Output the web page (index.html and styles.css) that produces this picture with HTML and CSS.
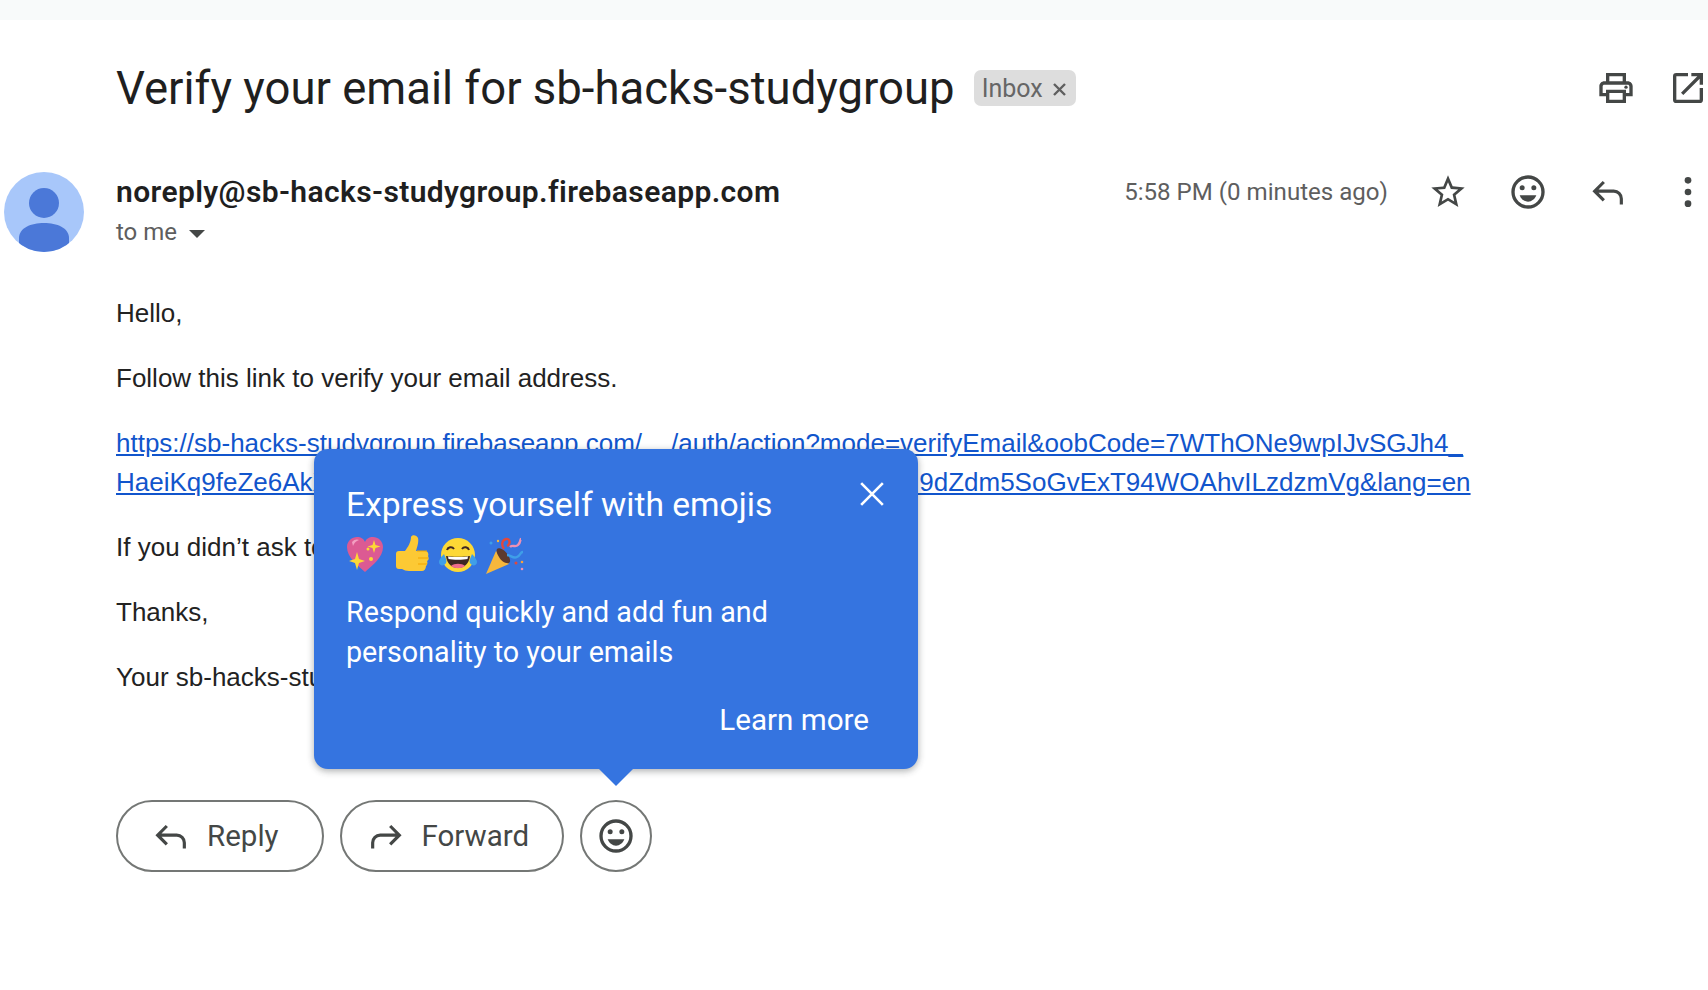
FILE: index.html
```html
<!DOCTYPE html>
<html lang="en">
<head>
<meta charset="utf-8">
<title>Verify your email</title>
<link rel="stylesheet" href="styles.css">
</head>
<body>
<svg class="defs" width="0" height="0" aria-hidden="true">
  <defs>
    <symbol id="i-reply" viewBox="0 0 24 24"><path class="arrow" d="M9.500 6L4 11.500 9.500 17M4.500 11.500h11c2.500 0 4.500 2 4.500 4.500v3.500"/></symbol>
    <symbol id="i-forward" viewBox="0 0 24 24"><path class="arrow" d="M14.500 6L20 11.500 14.500 17M19.500 11.500h-11C6 11.500 4 13.500 4 16v3.500"/></symbol>
    <symbol id="i-smile" viewBox="0 0 24 24"><path d="M12 2a10 10 0 1 0 0 20 10 10 0 0 0 0-20zm0 18a8 8 0 1 1 0-16 8 8 0 0 1 0 16z"/><circle cx="8.500" cy="9.500" r="1.500"/><circle cx="15.500" cy="9.500" r="1.500"/><path d="M7 14h10c-.8 2.300-2.800 3.800-5 3.800S7.800 16.300 7 14z"/></symbol>
    <clipPath id="avatar-clip"><circle cx="40" cy="40" r="40"/></clipPath>
  </defs>
</svg>
<div class="topbar"></div>
<main class="mail">
  <header class="subject">
    <h1 class="subject-title">Verify your email for sb-hacks-studygroup</h1>
    <span class="chip">Inbox <svg class="chip-x" viewBox="0 0 13 13"><path d="M1 1l11 11M12 1L1 12"/></svg></span>
    <div class="subject-actions">
      <svg class="icon" viewBox="0 0 24 24"><path d="M19 8h-1V3H6v5H5c-1.700 0-3 1.300-3 3v6h4v4h12v-4h4v-6c0-1.700-1.300-3-3-3zM8 5h8v3H8zm8 14H8v-4h8zm2-4v-2H6v2H4v-4c0-.6.400-1 1-1h14c.6 0 1 .4 1 1v4z"/><circle cx="18" cy="11.500" r="1"/></svg>
      <svg class="icon" viewBox="0 0 24 24"><path d="M19 19H5V5h7V3H5a2 2 0 0 0-2 2v14a2 2 0 0 0 2 2h14a2 2 0 0 0 2-2v-7h-2zM14 3v2h3.600l-9.800 9.800 1.400 1.400L19 6.400V10h2V3z"/></svg>
    </div>
  </header>

  <section class="sender">
    <svg class="avatar" viewBox="0 0 80 80"><circle cx="40" cy="40" r="40" fill="#a8c7fa"/><circle cx="40" cy="31" r="15" fill="#4b78d8"/><path d="M15 66C15 56 27 51 40 51s25 5 25 15v14H15z" fill="#4b78d8" clip-path="url(#avatar-clip)"/></svg>
    <div class="sender-main">
      <div class="sender-addr">noreply@sb-hacks-studygroup.firebaseapp.com</div>
      <div class="sender-to">to me <span class="caret"></span></div>
    </div>
    <div class="sender-actions">
      <span class="time">5:58 PM (0 minutes ago)</span>
      <svg class="icon" viewBox="0 0 24 24"><path d="M22 9.240l-7.190-.620L12 2 9.190 8.630 2 9.240l5.460 4.730L5.820 21 12 17.270 18.180 21l-1.630-7.030zM12 15.400l-3.760 2.270 1-4.280-3.320-2.880 4.380-.38L12 6.100l1.710 4.040 4.380.38-3.320 2.880 1 4.280z"/></svg>
      <svg class="icon"><use href="#i-smile"/></svg>
      <svg class="icon"><use href="#i-reply"/></svg>
      <svg class="icon" viewBox="0 0 24 24"><circle cx="12" cy="5" r="2"/><circle cx="12" cy="12" r="2"/><circle cx="12" cy="19" r="2"/></svg>
    </div>
  </section>

  <article class="body">
    <p>Hello,</p>
    <p>Follow this link to verify your email address.</p>
    <p><a href="#">https://sb-hacks-studygroup.firebaseapp.com/__/auth/action?mode=verifyEmail&amp;oobCode=7WThONe9wpIJvSGJh4_<br>HaeiKq9feZe6AkXwUo3TnB7Rc&amp;apiKey=AIzaSyCkLm2Qp8VrRw3HI9dZdm5SoGvExT94WOAhvILzdzmVg&amp;lang=en</a></p>
    <p>If you didn’t ask to verify this address, you can ignore this email.</p>
    <p>Thanks,</p>
    <p>Your sb-hacks-studygroup team</p>
  </article>

  <div class="actions">
    <button class="pill pill-reply"><svg class="icon"><use href="#i-reply"/></svg>Reply</button>
    <button class="pill pill-forward"><svg class="icon"><use href="#i-forward"/></svg>Forward</button>
    <button class="pill-round"><svg class="icon"><use href="#i-smile"/></svg></button>
  </div>
</main>

<aside class="tip">
  <svg class="tip-close" viewBox="0 0 24 24"><path d="M2 2l20 20M22 2L2 22"/></svg>
  <h2 class="tip-title">Express yourself with emojis</h2>
  <div class="tip-emojis">
    <svg class="emoji" viewBox="0 0 40 40"><path d="M20 37C12 30 2 22 2 12 2 6 7 2 12 2c4 0 7 2 8 5 1-3 4-5 8-5 5 0 10 4 10 10 0 10-10 18-18 25z" fill="#dc5a93"/><path d="M7 7c2-3 6-3 7-2-3 1-5 3-6 6z" fill="#f3a0c2"/><path d="M12 17l2 7 6 2-6 2-2 7-2-7-6-2 6-2zM29 5l1.500 5 5 1.500-5 1.500-1.500 5-1.500-5-5-1.500 5-1.500z" fill="#fdd835"/><circle cx="23" cy="14" r="1.500" fill="#fdd835"/><circle cx="26" cy="24" r="2" fill="#fdd835"/></svg>
    <svg class="emoji" viewBox="0 0 40 40"><path d="M4 19c0-2 1-3 3-3h6c3-4 6-9 6-14 1-3 6-2 7 1 1 4-1 9-2 13h9c3 0 4 3 3 5 1 2 1 4-1 5 1 2 0 4-1 5 0 3-2 5-4 5H17c-3 0-5-1-7-2H7c-2 0-3-1-3-3z" fill="#fcc934"/><path d="M25 16h10M26 23h10M26 29h9" stroke="#f2a600" stroke-width="1.200" fill="none"/></svg>
    <svg class="emoji" viewBox="0 0 40 40"><circle cx="20" cy="20" r="17" fill="#fdd835"/><path d="M8 21c4 1 20 1 24 0-1 8-6 12-12 12S9 29 8 21z" fill="#3e2723"/><path d="M10 21.500c4 .8 16 .8 20 0l-.5 2.500c-4 1-15 1-19 0z" fill="#fff"/><path d="M13 31c3-3 11-3 14 0-4 3-10 3-14 0z" fill="#ef6c8a"/><path d="M9 15c1-3 5-4 7-1M24 14c2-3 6-2 7 1" stroke="#3e2723" stroke-width="2" fill="none"/><path d="M6 19c-3 3-5 6-5 8 0 3 3 4 5 3s3-3 2-6zM34 19c3 3 5 6 5 8 0 3-3 4-5 3s-3-3-2-6z" fill="#3f9fe8"/></svg>
    <svg class="emoji" viewBox="0 0 40 40"><path d="M1 39l10-23 13 13z" fill="#f6b73c"/><path d="M12 14c2-2 8 1 11 6 2 3 3 7 1 8-3 1-8-2-10-6-2-3-3-6-2-8z" fill="#5d3a2e"/><path d="M19 14c-3-4-2-9 2-10s5 5 1 7" stroke="#e2483c" stroke-width="2.400" fill="none"/><path d="M25 12c3-3 5 1 8-2s2-6 3-6" stroke="#ee90b4" stroke-width="2.400" fill="none"/><path d="M22 20c4 0 6 4 10 2s3-5 6-5" stroke="#3f9fe8" stroke-width="2.400" fill="none"/><circle cx="6" cy="8" r="1.500" fill="#3f9fe8"/><circle cx="13" cy="6" r="1.200" fill="#f6b73c"/><circle cx="31" cy="28" r="1.500" fill="#e2483c"/><circle cx="37" cy="34" r="1.300" fill="#ee90b4"/><circle cx="37" cy="27" r="1.300" fill="#f6a33c"/></svg>
  </div>
  <p class="tip-text">Respond quickly and add fun and personality to your emails</p>
  <div class="tip-foot"><a class="tip-link" href="#">Learn more</a></div>
  <span class="tip-arrow"></span>
</aside>
</body>
</html>
```

FILE: styles.css
```css
* { box-sizing: border-box; }
html, body { margin: 0; padding: 0; height: 100%; overflow: hidden; background: #fff; }
body { font-family: "Roboto", "Liberation Sans", sans-serif; color: #1f1f1f; position: relative; }
.defs { position: absolute; }
.topbar { height: 20px; background: #f8fafa; }
.mail { padding: 0 0 0 4px; }
.icon { width: 40px; height: 40px; fill: #444746; flex: none; display: block; }
.arrow { fill: none; stroke: #444746; stroke-width: 1.900; }

.subject { display: flex; align-items: center; height: 60px; margin-top: 38px; padding-left: 112px; }
.subject-title { margin: 0; padding-top: 2px; font-size: 45.500px; font-weight: 400; line-height: 60px; color: #1f1f1f; }
.chip { margin-left: 19px; height: 36px; width: 102px; display: flex; align-items: center; padding-left: 8px; gap: 10px; background: #dddddd; border-radius: 7px; color: #666666; font-size: 25px; }
.chip-x { width: 13px; height: 13px; margin-top: 2px; stroke: #5f5f5f; stroke-width: 2.400; fill: none; }
.subject-actions { margin-left: auto; display: flex; gap: 32px; }

.sender { display: flex; align-items: flex-start; margin-top: 54px; }
.avatar { width: 80px; height: 80px; flex: none; }
.sender-main { margin-left: 32px; flex: 1; }
.sender-addr { font-size: 30px; font-weight: 600; letter-spacing: .38px; line-height: 40px; color: #1f1f1f; }
.sender-to { font-size: 24px; line-height: 34px; color: #5e5e5e; margin-top: 3px; display: flex; align-items: center; gap: 12px; }
.caret { width: 0; height: 0; border-left: 8px solid transparent; border-right: 8px solid transparent; border-top: 8px solid #444746; margin-top: 3px; }
.sender-actions { display: flex; align-items: center; height: 40px; gap: 40px; }
.time { font-size: 24.100px; color: #5e5e5e; }

.body { margin: 42px 0 0 112px; font-family: "Liberation Sans", Arial, sans-serif; font-size: 26px; line-height: 39px; color: #222222; }
.body p { margin: 0 0 26px; }
.body a { color: #1155cc; }

.actions { display: flex; gap: 16px; margin: 103px 0 0 112px; }
.pill, .pill-round { height: 72px; display: flex; align-items: center; background: #fff; border: 2px solid #747775; font-family: inherit; color: #444746; font-size: 29.500px; font-weight: 400; }
.pill { border-radius: 36px; gap: 16px; }
.pill-reply { padding: 0 43px 0 33px; }
.pill-forward { padding: 0 33px 0 24px; }
.pill-round { width: 72px; padding: 0; border-radius: 50%; justify-content: center; }

.tip { position: absolute; left: 314px; top: 449px; width: 604px; height: 320px; background: #3574e0; border-radius: 14px; color: #fff; padding: 36px 49px 0 32px; box-shadow: 0 2px 6px rgba(60, 64, 67, .3), 0 2px 8px rgba(60, 64, 67, .15); }
.tip-close { position: absolute; right: 33px; top: 32px; width: 26px; height: 26px; stroke: #fff; stroke-width: 2.400; fill: none; }
.tip-title { margin: 0; font-size: 33.650px; font-weight: 400; line-height: 40px; }
.tip-emojis { display: flex; gap: 6.500px; margin-top: 10px; height: 40px; margin-left: -1px; }
.emoji { width: 40px; height: 40px; }
.tip-text { margin: 18px 0 0; font-size: 28.700px; line-height: 39.500px; }
.tip-foot { display: flex; justify-content: flex-end; margin-top: 28px; }
.tip-link { color: #fff; text-decoration: none; font-size: 29.600px; font-weight: 400; line-height: 40px; }
.tip-arrow { position: absolute; left: 284px; bottom: -17px; width: 0; height: 0; border-left: 18px solid transparent; border-right: 18px solid transparent; border-top: 18px solid #3574e0; }
```
